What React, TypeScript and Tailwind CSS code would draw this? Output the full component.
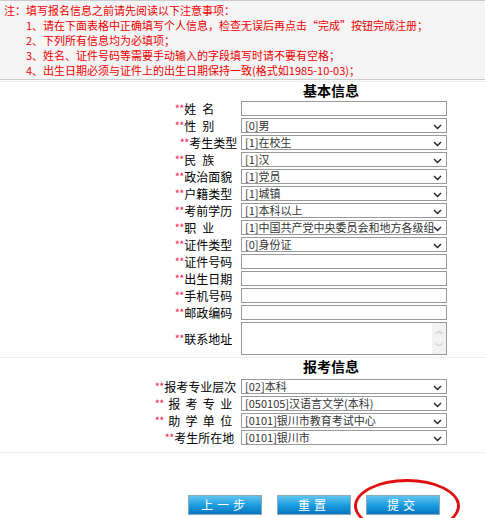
const F = { fontFamily: '"Noto Sans CJK SC", "Liberation Sans", sans-serif' };

const Star = () => <span className="text-[9px] font-bold leading-[9px] text-[#f03060]">**</span>;

function Chevron() {
  return (
    <svg width="9" height="6" viewBox="0 0 9 6" className="absolute right-[4px] top-[5px]">
      <path d="M1 1l3.5 3.5L8 1" stroke="#222" strokeWidth="1.4" fill="none" />
    </svg>
  );
}

function Row({ label, value, select, indent = 0 }: { label: React.ReactNode; value?: string; select?: boolean; indent?: number }) {
  return (
    <div className="flex h-[17px] items-center">
      <div className="flex w-[241px] items-center text-[12px] text-black" style={{ paddingLeft: 175 + indent }}>
        <Star />
        {label}
      </div>
      <div className="relative h-[15px] w-[206px] border border-[#999] bg-white pl-[3px] text-[11px] leading-[13px] text-[#333]">
        {value}
        {select && <Chevron />}
      </div>
    </div>
  );
}

const Spread = ({ t, w = 48 }: { t: string; w?: number }) => (
  <span className="flex justify-between" style={{ width: w }}>
    {t.split('').map((c, i) => <span key={i}>{c}</span>)}
  </span>
);

function Btn({ t }: { t: string }) {
  return (
    <div className="flex h-[20px] w-[74px] items-center justify-center border border-[#8ab] bg-gradient-to-b from-[#5ec4f0] via-[#1a9ee0] to-[#0a74c0] text-[12px] tracking-[4px] text-white">
      {t}
    </div>
  );
}

export default function App() {
  const notes = [
    '1、请在下面表格中正确填写个人信息，检查无误后再点击“完成”按钮完成注册；',
    '2、下列所有信息均为必填项；',
    '3、姓名、证件号码等需要手动输入的字段填写时请不要有空格；',
    '4、出生日期必须与证件上的出生日期保持一致(格式如1985-10-03)；',
  ];
  return (
    <div className="h-[518px] w-[485px] overflow-hidden bg-white" style={F}>
      <div className="h-[80px] border-t border-b border-[#ccc] bg-[#f5f5f5] pl-[4px] pt-[2px] text-[11px] leading-[15px] text-[#e00]">
        <div>注：填写报名信息之前请先阅读以下注意事项：</div>
        {notes.map((n) => (
          <div key={n} className="pl-[22px]">{n}</div>
        ))}
      </div>
      <div className="mt-[1px] border-t border-[#eee] pl-[303px] text-[14px] font-bold leading-[16px] text-black">基本信息</div>
      <div className="mt-[2px]">
        <Row label={<Spread t="姓名" w={30} />} />
        <Row label={<Spread t="性别" w={30} />} value="[0]男" select />
        <Row label="考生类型" value="[1]在校生" select indent={5} />
        <Row label={<Spread t="民族" w={30} />} value="[1]汉" select />
        <Row label="政治面貌" value="[1]党员" select />
        <Row label="户籍类型" value="[1]城镇" select />
        <Row label="考前学历" value="[1]本科以上" select />
        <Row label={<Spread t="职业" w={30} />} value="[1]中国共产党中央委员会和地方各级组" select />
        <Row label="证件类型" value="[0]身份证" select />
        <Row label="证件号码" />
        <Row label="出生日期" />
        <Row label="手机号码" />
        <Row label="邮政编码" />
        <div className="flex h-[35px] items-center">
          <div className="flex w-[241px] items-center pl-[175px] text-[12px]">
            <Star />联系地址
          </div>
          <div className="relative h-[33px] w-[206px] border border-[#999] bg-white">
            <div className="absolute right-0 top-0 flex h-full w-[14px] flex-col items-center justify-between bg-[#f2f2f2] py-[3px] text-[8px] leading-[8px] text-[#aaa]">
              <span>︿</span><span>﹀</span>
            </div>
          </div>
        </div>
      </div>
      <div className="mt-[1px] border-t border-[#eee] pl-[303px] text-[14px] font-bold leading-[16px] text-black">报考信息</div>
      <div className="mt-[4px]">
        <Row label="报考专业层次" value="[02]本科" select indent={-20} />
        <Row label={<span className="pl-[4px]"><Spread t="报考专业" w={64} /></span>} value="[050105]汉语言文学(本科)" select indent={-20} />
        <Row label={<span className="pl-[4px]"><Spread t="助学单位" w={64} /></span>} value="[0101]银川市教育考试中心" select indent={-20} />
        <Row label="考生所在地" value="[0101]银川市" select indent={-10} />
      </div>
      <div className="mt-[6px] border-t border-[#eee]" />
      <div className="relative mt-[42px] flex gap-[15px] pl-[188px]">
        <Btn t="上一步" />
        <Btn t="重置" />
        <Btn t="提交" />
        <div className="absolute left-[354px] top-[-16px] h-[54px] w-[106px] rounded-[50%] border-[3px] border-[#e01010]" />
      </div>
    </div>
  );
}
